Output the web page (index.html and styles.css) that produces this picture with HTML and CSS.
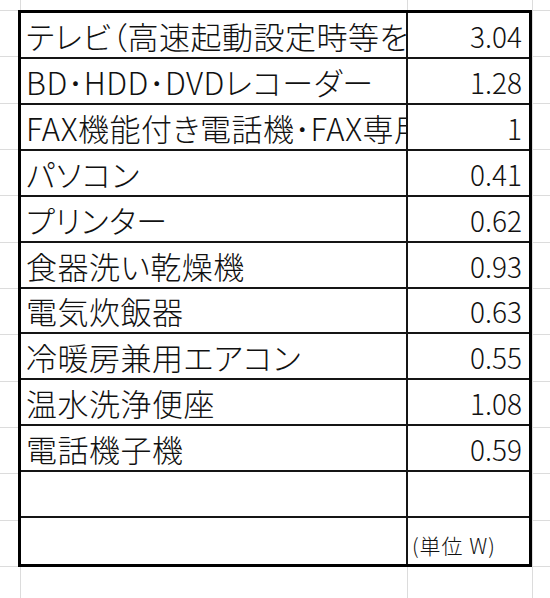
FILE: index.html
```html
<!DOCTYPE html>
<html lang="ja">
<head>
<meta charset="utf-8">
<title>待機電力</title>
<link rel="stylesheet" href="styles.css">
</head>
<body>
<div class="sheet">
  <div class="table">
    <div class="cell name">テレビ（高速起動設定時等を含む）</div><div class="cell num">3.04</div>
    <div class="cell name">BD･HDD･DVDレコーダー</div><div class="cell num">1.28</div>
    <div class="cell name">FAX機能付き電話機･FAX専用機</div><div class="cell num">1</div>
    <div class="cell name">パソコン</div><div class="cell num">0.41</div>
    <div class="cell name">プリンター</div><div class="cell num">0.62</div>
    <div class="cell name">食器洗い乾燥機</div><div class="cell num">0.93</div>
    <div class="cell name">電気炊飯器</div><div class="cell num">0.63</div>
    <div class="cell name">冷暖房兼用エアコン</div><div class="cell num">0.55</div>
    <div class="cell name">温水洗浄便座</div><div class="cell num">1.08</div>
    <div class="cell name">電話機子機</div><div class="cell num">0.59</div>
    <div class="cell name"></div><div class="cell num"></div>
    <div class="cell name last"></div><div class="cell unit last">(単位 W)</div>
  </div>
</div>
</body>
</html>
```

FILE: styles.css
```css
html, body {
  margin: 0;
  padding: 0;
  background: #fff;
}

.sheet {
  width: 550px;
  height: 598px;
  box-sizing: border-box;
  padding: 10px 0 0 18px;
  overflow: hidden;
  background-color: #fff;
  background-image:
    linear-gradient(to right,
      transparent 0, transparent 20px,
      #dcdcdc 20px, #dcdcdc 21px,
      transparent 21px, transparent 407px,
      #dcdcdc 407px, #dcdcdc 408px,
      transparent 408px, transparent 532px,
      #dcdcdc 532px, #dcdcdc 533px,
      transparent 533px),
    repeating-linear-gradient(to bottom,
      #dcdcdc 0, #dcdcdc 1px,
      transparent 1px, transparent 46.333px);
  background-position: 0 0, 0 10px;
  font-family: "Noto Sans CJK JP", "Noto Sans", sans-serif;
  color: #111;
}

.table {
  width: 514px;
  height: 557px;
  box-sizing: border-box;
  border: 3px solid #000;
  background: #fff;
  display: grid;
  grid-template-columns: 387px 1fr;
  grid-template-rows: repeat(12, 1fr);
}

.cell {
  display: flex;
  align-items: flex-end;
  overflow: hidden;
  white-space: nowrap;
  border-bottom: 2px solid #151515;
  min-width: 0;
}

.cell.last {
  border-bottom: none;
}

.name {
  border-right: 2px solid #151515;
  padding: 0 0 3px 5px;
  font-size: 31px;
  line-height: 36px;
  font-weight: 300;
  font-feature-settings: "palt" 1;
  letter-spacing: 0.5px;
}

.num {
  justify-content: flex-end;
  padding: 0 7px 4px 0;
  font-size: 28px;
  line-height: 34px;
  font-weight: 300;
}

.unit {
  padding: 0 0 6px 4px;
  font-size: 21px;
  line-height: 26px;
  letter-spacing: 1px;
  font-weight: 300;
}
```
